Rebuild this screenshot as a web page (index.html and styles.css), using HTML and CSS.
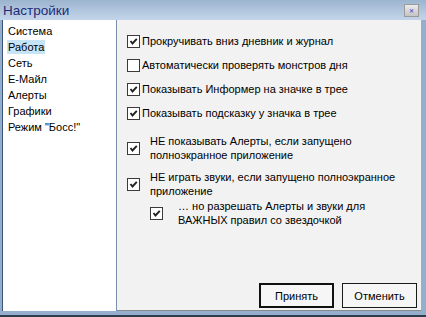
FILE: index.html
```html
<!DOCTYPE html>
<html>
<head>
    <title>Настройки</title>
    <link rel="stylesheet" href="styles.css">
</head>
<body>
    <div class="window">
        <!-- заголовок окна -->
        <div class="titlebar">
            <span class="title">Настройки</span>
            <span class="close-btn">&#x2715;</span>
        </div>

        <div class="body">
            <!-- список разделов -->
            <ul class="nav">
                <li>Система</li>
                <li><span class="selected">Работа</span></li>
                <li>Сеть</li>
                <li>Е-Майл</li>
                <li>Алерты</li>
                <li>Графики</li>
                <li>Режим "Босс!"</li>
            </ul>

            <!-- настройки раздела -->
            <div class="panel">
                <div class="options">
                    <label class="opt"><span class="box checked"></span>Прокручивать вниз дневник и журнал</label>
                    <label class="opt"><span class="box"></span>Автоматически проверять монстров дня</label>
                    <label class="opt"><span class="box checked"></span>Показывать Информер на значке в трее</label>
                    <label class="opt"><span class="box checked"></span>Показывать подсказку у значка в трее</label>
                    <label class="opt multi first"><span class="box checked"></span><span class="text">НЕ показывать Алерты, если запущено<br>полноэкранное приложение</span></label>
                    <label class="opt multi second"><span class="box checked"></span><span class="text">НЕ играть звуки, если запущено полноэкранное<br>приложение</span></label>
                    <label class="opt multi sub"><span class="box checked"></span><span class="text">… но разрешать Алерты и звуки для<br>ВАЖНЫХ правил со звездочкой</span></label>
                </div>
                <div class="buttons">
                    <button class="btn default">Принять</button>
                    <button class="btn">Отменить</button>
                </div>
            </div>
        </div>
    </div>
</body>
</html>
```

FILE: styles.css
```css
/* окно целиком */
body {
    margin: 0;
    font-family: "Liberation Sans", Arial, sans-serif;
    font-size: 11px;
    color: #000;
}
.window {
    width: 426px;
    height: 317px;
    box-sizing: border-box;
    display: flex;
    flex-direction: column;
    background: #94aece;
    border-bottom: 2px solid #2e3d4e;
}
/* заголовок */
.titlebar {
    height: 20px;
    flex: none;
    display: flex;
    align-items: center;
    justify-content: space-between;
    padding: 0 7px 0 3px;
    background: linear-gradient(#9cb4cf, #b4c8df 60%, #c3d5e9);
}
.title {
    font-size: 13.5px;
    color: #1b2c78;
}
.close-btn {
    width: 13px;
    height: 11px;
    display: flex;
    align-items: center;
    justify-content: center;
    font-size: 6px;
    font-weight: bold;
    color: #5a5ec8;
    border: 1px solid #9a9a9a;
    background: linear-gradient(#ececec, #c4c4c4);
}
/* основная часть */
.body {
    flex: 1;
    display: flex;
    padding: 0 5px 4px 2px;
}
.nav {
    width: 108px;
    margin: 0;
    padding: 3px 0 0 5px;
    list-style: none;
    background: #fff;
    border-left: 1px solid #3c5478;
    border-right: 1px solid #7a8eae;
}
.nav li {
    height: 16px;
    line-height: 16px;
}
.nav .selected {
    background: #c5e4f6;
    padding: 1px 1px;
    margin-left: -1px;
}
/* правая панель */
.panel {
    flex: 1;
    display: flex;
    flex-direction: column;
    background: #f2f2f2;
    border-bottom: 1px solid #8a8a8a;
}
.options {
    flex: 1;
    padding: 9px 0 0 10px;
}
.opt {
    display: flex;
    align-items: center;
    height: 24px;
    gap: 2px;
}
.opt.multi {
    height: auto;
    line-height: 14px;
    gap: 10px;
}
.opt.first { margin-top: 9px; }
.opt.second { margin-top: 8px; }
.opt.sub {
    margin-top: 1px;
    margin-left: 23px;
    gap: 15px;
}
/* флажок */
.box {
    width: 11px;
    height: 11px;
    flex: none;
    background: #fff;
    border: 1px solid #3a3a3a;
}
.box.checked {
    background: #fff url("data:image/svg+xml,%3Csvg xmlns='http://www.w3.org/2000/svg' width='11' height='11'%3E%3Cpolyline points='2.5,5 4.5,7.5 8.8,2.8' fill='none' stroke='%23222' stroke-width='1.9'/%3E%3C/svg%3E") no-repeat;
}
/* кнопки */
.buttons {
    display: flex;
    justify-content: flex-end;
    gap: 8px;
    padding: 0 4px 2px 0;
}
.btn {
    width: 75px;
    height: 25px;
    font-family: inherit;
    font-size: 11px;
    background: #f6f6f6;
    border: 1px solid #1a1a1a;
    padding: 0;
}
.btn.default {
    border: 2px solid #111;
}
```
